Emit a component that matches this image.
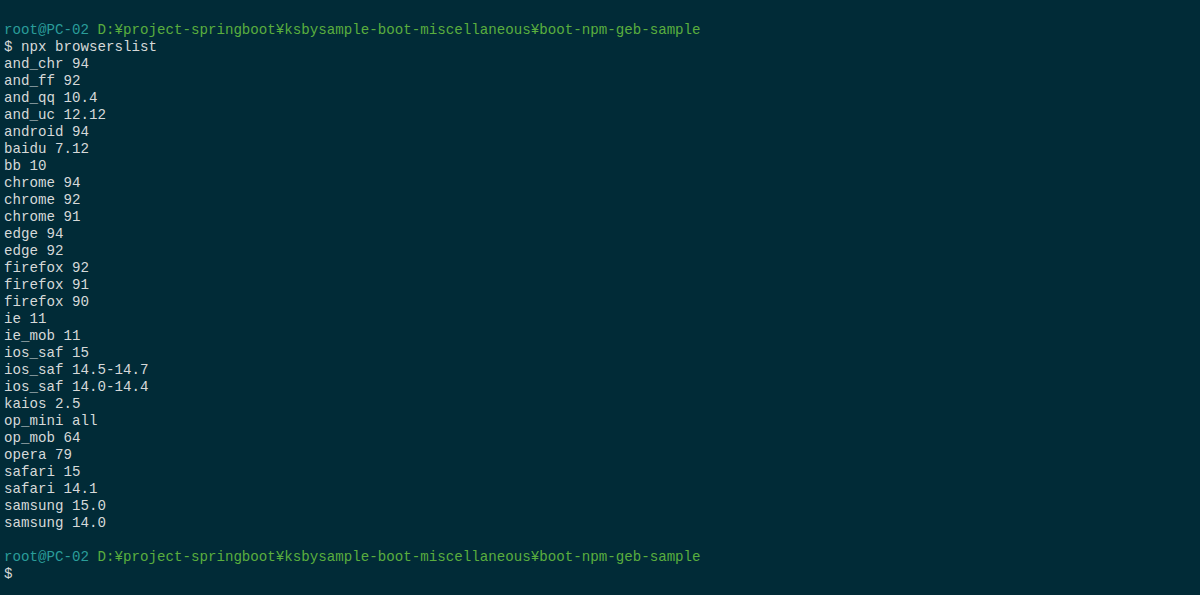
const header = (
  <div>
    <span className="text-[#2a9d9a]">root@PC-02</span>{" "}
    <span className="text-[#5aae3e]">D:¥project-springboot¥ksbysample-boot-miscellaneous¥boot-npm-geb-sample</span>
  </div>
);

const browsers = [
  "and_chr 94",
  "and_ff 92",
  "and_qq 10.4",
  "and_uc 12.12",
  "android 94",
  "baidu 7.12",
  "bb 10",
  "chrome 94",
  "chrome 92",
  "chrome 91",
  "edge 94",
  "edge 92",
  "firefox 92",
  "firefox 91",
  "firefox 90",
  "ie 11",
  "ie_mob 11",
  "ios_saf 15",
  "ios_saf 14.5-14.7",
  "ios_saf 14.0-14.4",
  "kaios 2.5",
  "op_mini all",
  "op_mob 64",
  "opera 79",
  "safari 15",
  "safari 14.1",
  "samsung 15.0",
  "samsung 14.0",
];

export default function App() {
  return (
    <div className="w-[1200px] h-[595px] overflow-hidden bg-[#012b37] pl-[4px] pt-[22px] text-[#d6d9d9] font-['Liberation_Mono',monospace] text-[14.17px] leading-[17px] whitespace-pre">
      {header}
      <div>$ npx browserslist</div>
      {browsers.map((b) => (
        <div key={b}>{b}</div>
      ))}
      <div>&nbsp;</div>
      {header}
      <div>$</div>
    </div>
  );
}
